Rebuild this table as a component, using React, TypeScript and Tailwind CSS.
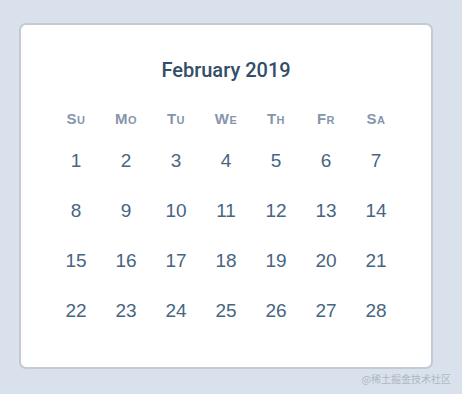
import React from "react";

const days = ["Su", "Mo", "Tu", "We", "Th", "Fr", "Sa"];
const dates = Array.from({ length: 28 }, (_, i) => i + 1);

export default function App() {
  return (
    <div className="relative w-[462px] h-[394px] bg-[#d9e2ec] pt-[23px] pl-[19px]">
      <div className="w-[414px] h-[346px] bg-white rounded-[7px] border-2 border-[#c3cad4] flex flex-col items-center">
        <div
          className="mt-[31px] h-[28px] flex items-center text-[20px] font-medium text-[#334e68]"
          style={{ fontFamily: "Roboto, sans-serif" }}
        >
          February 2019
        </div>
        <div
          className="mt-[24px] grid grid-cols-[repeat(7,50px)] h-[20px] items-center text-[15px] font-bold tracking-[0.5px] text-[#8596ab] [font-variant:small-caps]"
          style={{ fontFamily: "'Liberation Sans', Arial, sans-serif" }}
        >
          {days.map((d) => (
            <div key={d} className="text-center">
              {d}
            </div>
          ))}
        </div>
        <div
          className="mt-[8px] grid grid-cols-[repeat(7,50px)] grid-rows-[repeat(4,50px)] text-[19px] text-[#486581]"
          style={{ fontFamily: "'Liberation Sans', Arial, sans-serif" }}
        >
          {dates.map((d) => (
            <div key={d} className="flex items-center justify-center h-[50px]">
              {d}
            </div>
          ))}
        </div>
      </div>
      <div
        className="absolute right-[11px] bottom-[8px] text-[10px] text-[#aeb7c2]"
        style={{ fontFamily: "'Noto Sans CJK SC', sans-serif" }}
      >
        @稀土掘金技术社区
      </div>
    </div>
  );
}
